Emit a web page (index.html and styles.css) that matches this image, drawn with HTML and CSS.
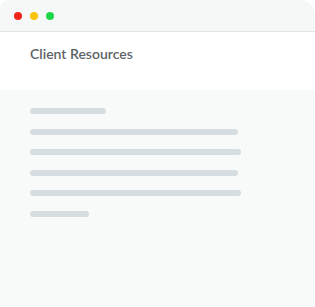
FILE: index.html
```html
<!DOCTYPE html>
<html lang="en">
<head>
    <meta charset="UTF-8">
    <meta name="viewport" content="width=device-width, initial-scale=1.0">
    <title>Client Resources</title>
    <link rel="stylesheet" href="styles.css">
</head>
<body>
    <div class="window">
        <div class="titlebar">
            <span class="dot dot-red"></span>
            <span class="dot dot-yellow"></span>
            <span class="dot dot-green"></span>
        </div>
        <div class="header">
            <h1 class="title">Client Resources</h1>
        </div>
        <div class="content">
            <div class="line line-short"></div>
            <div class="line line-long"></div>
            <div class="line line-full"></div>
            <div class="line line-long"></div>
            <div class="line line-full"></div>
            <div class="line line-tiny"></div>
        </div>
    </div>
</body>
</html>
```

FILE: styles.css
```css
body {
    margin: 0;
    padding: 0;
    background: #fff;
    font-family: Lato, "Noto Sans", sans-serif;
}

.window {
    width: 315px;
    height: 307px;
    display: flex;
    flex-direction: column;
    background: #f8fafa;
    border-radius: 9px 15px 0 0;
    overflow: hidden;
}

.titlebar {
    height: 32px;
    display: flex;
    align-items: center;
    gap: 8px;
    padding-left: 14px;
    background: #f6f8f8;
    border-bottom: 1px solid #e1e7e7;
    box-sizing: border-box;
    flex-shrink: 0;
}

.dot {
    width: 8px;
    height: 8px;
    border-radius: 50%;
}

.dot-red {
    background: #f0261e;
}

.dot-yellow {
    background: #f7c40b;
}

.dot-green {
    background: #1ed64a;
}

.header {
    height: 58px;
    box-sizing: border-box;
    padding: 13px 0 0 30px;
    background: #fff;
    flex-shrink: 0;
}

.title {
    margin: 0;
    font-size: 14px;
    line-height: 17px;
    font-weight: 600;
    color: #5e6367;
}

.content {
    display: flex;
    flex-direction: column;
    gap: 14.5px;
    padding: 18px 0 0 30px;
}

.line {
    height: 6px;
    border-radius: 3px;
    background: #d6dde0;
}

.line-short {
    width: 76px;
}

.line-long {
    width: 208px;
}

.line-full {
    width: 211px;
}

.line-tiny {
    width: 59px;
}
```
